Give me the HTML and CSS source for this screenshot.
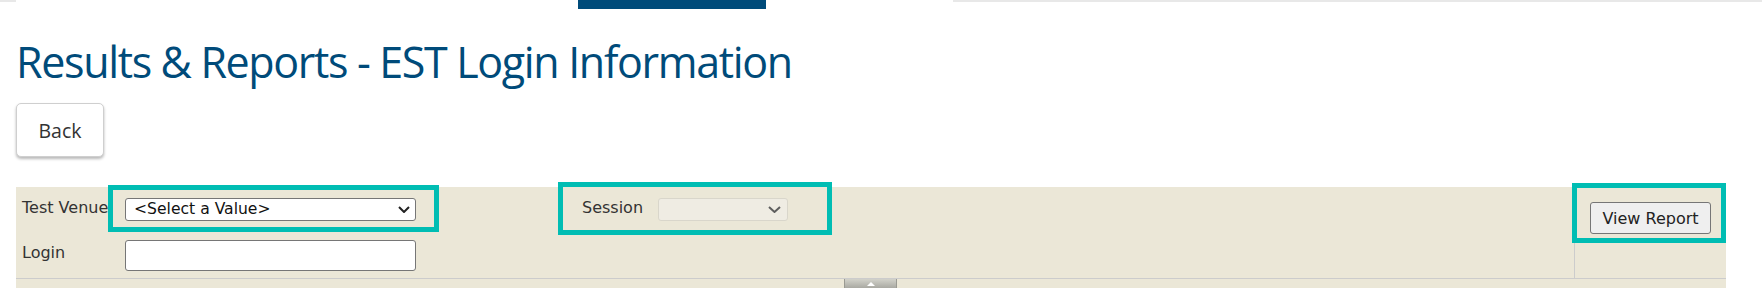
FILE: index.html
```html
<!DOCTYPE html>
<html lang="en">
<head>
<meta charset="utf-8">
<title>Results &amp; Reports - EST Login Information</title>
<link rel="stylesheet" href="styles.css">
</head>
<body>
<div class="topbar">
  <span class="tb-line tb-left"></span>
  <span class="tb-gap1"></span>
  <span class="tb-tab"></span>
  <span class="tb-gap2"></span>
  <span class="tb-line tb-right"></span>
</div>
<main class="page">
  <h1 class="title">Results &amp; Reports - EST Login Information</h1>
  <button class="back" type="button">Back</button>
  <section class="panel">
    <div class="panel-row">
      <div class="params">
        <label class="lbl lbl-venue">Test Venue</label>
        <span class="selwrap sw-venue">
          <select class="sel"><option>&lt;Select a Value&gt;</option></select>
          <svg class="chev chev-venue" width="12" height="7" viewBox="0 0 12 7"><polyline points="1,1 6,6 11,1" fill="none" stroke="#222222" stroke-width="2"/></svg>
        </span>
        <label class="lbl lbl-session">Session</label>
        <span class="selwrap sw-session">
          <select class="sel sel-disabled" disabled><option></option></select>
          <svg class="chev chev-session" width="13" height="7" viewBox="0 0 13 7"><polyline points="1,1 6.5,6 12,1" fill="none" stroke="#5e5e5e" stroke-width="2"/></svg>
        </span>
        <label class="lbl lbl-login">Login</label>
        <input class="inp" type="text">
      </div>
      <div class="actions">
        <button class="view" type="button">View Report</button>
      </div>
    </div>
    <div class="panel-foot">
      <span class="toggle"><svg class="toggle-arrow" width="8" height="4" viewBox="0 0 8 4"><polygon points="0,4 4,0 8,4" fill="#ffffff"/></svg></span>
    </div>
  </section>
</main>
<div class="mark mark-venue"></div>
<div class="mark mark-session"></div>
<div class="mark mark-view"></div>
</body>
</html>
```

FILE: styles.css
```css
html, body {
  margin: 0;
  padding: 0;
  background: #ffffff;
}
body {
  font-family: "DejaVu Sans", Verdana, sans-serif;
  position: relative;
  width: 1762px;
  height: 307px;
  overflow: hidden;
}
.topbar {
  display: flex;
  align-items: flex-start;
  height: 9px;
}
.tb-line {
  height: 2px;
  background: #e8e8e8;
}
.tb-left { width: 16px; }
.tb-gap1 { width: 562px; }
.tb-tab {
  width: 188px;
  height: 9px;
  background: #004b7a;
}
.tb-gap2 { width: 187px; }
.tb-right { flex: 1; }

.page {
  padding: 0 36px 0 16px;
}
.title {
  margin: 32px 0 0 0;
  font-family: "Open Sans", sans-serif;
  font-weight: 400;
  font-size: 43px;
  line-height: 42px;
  letter-spacing: -1.35px;
  color: #004b7a;
  white-space: nowrap;
}
.back {
  display: block;
  margin-top: 20px;
  width: 88px;
  height: 54px;
  padding: 0;
  background: #ffffff;
  border: 1px solid #cfcfcf;
  border-radius: 5px;
  box-shadow: 0 2px 3px rgba(0, 0, 0, 0.28);
  font-family: "Open Sans", sans-serif;
  font-size: 19.5px;
  color: #333333;
}
.panel {
  margin-top: 30px;
  width: 1710px;
  background: #ebe7d7;
}
.panel-row {
  display: flex;
  height: 92px;
  border-bottom: 1px solid #cccccc;
  box-sizing: border-box;
}
.params {
  flex: 1;
  display: grid;
  grid-template-columns: 104px 291px 166px 76px 130px;
  grid-template-rows: 23px 31px;
  row-gap: 19px;
  padding: 11px 0 0 5px;
  align-content: start;
}
.lbl {
  font-family: "DejaVu Sans", Verdana, sans-serif;
  font-size: 16px;
  line-height: 17px;
  color: #333333;
  align-self: start;
  white-space: nowrap;
  padding-top: 1px;
  padding-left: 1px;
}
.lbl-venue { grid-column: 1; grid-row: 1; }
.sw-venue { grid-column: 2; grid-row: 1; }
.lbl-session { grid-column: 4; grid-row: 1; padding-left: 0; }
.sw-session { grid-column: 5; grid-row: 1; }
.lbl-login { grid-column: 1; grid-row: 2; padding-top: 4px; }
.inp { grid-column: 2; grid-row: 2; }

.selwrap {
  display: grid;
}
.selwrap > * {
  grid-area: 1 / 1;
}
.sel {
  -webkit-appearance: none;
  appearance: none;
  box-sizing: border-box;
  height: 23px;
  width: 100%;
  margin: 0;
  padding: 0 24px 0 8px;
  border: 1px solid #767676;
  border-radius: 3px;
  background: #ffffff;
  font-family: "DejaVu Sans", Verdana, sans-serif;
  font-size: 15.6px;
  line-height: 21px;
  color: #111111;
}
.sel-disabled {
  background: #f1efe9;
  border-color: #d2cfc6;
}
.chev {
  position: relative;
  z-index: 1;
  justify-self: end;
  align-self: center;
  pointer-events: none;
}
.chev-venue { margin-right: 6px; }
.chev-session { margin-right: 7px; }
.inp {
  box-sizing: border-box;
  width: 291px;
  height: 31px;
  margin: 0;
  border: 1px solid #767676;
  border-radius: 3px;
  background: #ffffff;
}
.actions {
  width: 152px;
  box-sizing: border-box;
  border-left: 1px solid #cccccc;
  padding: 15px 0 0 15px;
}
.view {
  box-sizing: border-box;
  width: 121px;
  height: 32px;
  padding: 0;
  margin: 0;
  border: 1px solid #767676;
  border-radius: 3px;
  background: #efefef;
  font-family: "DejaVu Sans", Verdana, sans-serif;
  font-size: 16px;
  color: #222222;
}
.panel-foot {
  height: 9px;
  display: flex;
}
.toggle {
  margin-left: 828px;
  width: 53px;
  height: 9px;
  box-sizing: border-box;
  border-left: 1px solid #9a9a92;
  border-right: 1px solid #9a9a92;
  background: linear-gradient(#d2d2ca, #a9a9a2);
  display: flex;
  align-items: center;
  justify-content: center;
}
.toggle-arrow { display: block; }

.mark {
  position: absolute;
  box-sizing: border-box;
  border: 5px solid #00bdb3;
}
.mark-venue { left: 108px; top: 185px; width: 331px; height: 47px; }
.mark-session { left: 558px; top: 182px; width: 274px; height: 53px; }
.mark-view { left: 1572px; top: 183px; width: 154px; height: 60px; }
```
